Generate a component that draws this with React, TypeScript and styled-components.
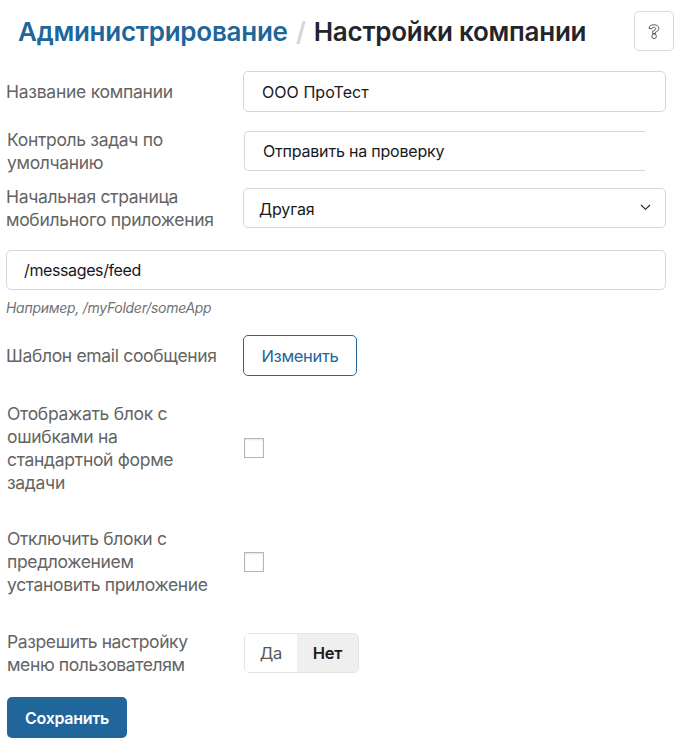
import React, { useState } from 'react';
import styled, { createGlobalStyle } from 'styled-components';

const GlobalStyle = createGlobalStyle`
  * { box-sizing: border-box; }
  body { margin: 0; background: #fff; }
  body, input, button { font-family: Inter, "Liberation Sans", sans-serif; }
`;

const Page = styled.main`
  width: 680px;
  height: 748px;
  padding: 11px 6px 0;
  overflow: hidden;
`;

const Header = styled.header`
  display: flex;
  justify-content: space-between;
  height: 40px;
  padding-left: 12px;
`;

const Title = styled.h1`
  display: flex;
  margin: 0;
  font-size: 26px;
  font-weight: 560;
  line-height: 41px;
  letter-spacing: -0.25px;
  white-space: nowrap;
  color: #22262c;
`;

const TitleLink = styled.a`
  color: #20669b;
  text-decoration: none;
`;

const Slash = styled.span`
  width: 26px;
  text-align: center;
  color: #d4d4d4;
`;

const HelpButton = styled.button`
  display: grid;
  place-items: center;
  width: 40px;
  height: 40px;
  padding: 2px 0 0;
  border: 1px solid #d9dadb;
  border-radius: 5px;
  background: #fff;
`;

const Row = styled.div<{ $gap: number; $height?: number; $inset?: boolean }>`
  display: grid;
  grid-template-columns: 237px 423px;
  grid-template-rows: 100%;
  align-items: center;
  height: ${(p) => p.$height ?? 40}px;
  margin-top: ${(p) => p.$gap}px;
  padding-left: ${(p) => (p.$inset ? 1 : 0)}px;
`;

const Label = styled.span<{ $spacing?: number; $lift?: number }>`
  margin-bottom: ${(p) => p.$lift ?? 0}px;
  font-size: 17.5px;
  line-height: 23px;
  letter-spacing: ${(p) => p.$spacing ?? -0.33}px;
  color: #646464;
  white-space: pre-line;
`;

const Field = styled.input<{ $cut?: boolean; $spacing?: number }>`
  width: ${(p) => (p.$cut ? '401px' : '100%')};
  height: 100%;
  padding: 0 18px;
  border: 1px solid #d6d7d8;
  border-radius: 5px;
  outline: 0;
  font-size: 16px;
  letter-spacing: ${(p) => p.$spacing ?? -0.2}px;
  color: #17191c;
  ${(p) => p.$cut && 'border-right: 0; border-radius: 5px 0 0 5px;'}
`;

const Select = styled.button`
  display: flex;
  align-items: center;
  justify-content: space-between;
  height: 100%;
  padding: 0 14px 0 15px;
  border: 1px solid #d6d7d8;
  border-radius: 5px;
  background: #fff;
  font-size: 16px;
  letter-spacing: -0.15px;
  color: #17191c;

  span { padding-top: 2px; }
`;

const PathField = styled.div`
  width: 660px;
  height: 40px;
  margin-top: 22px;

  input { padding-left: 17px; }
`;

const Hint = styled.p`
  margin: 8px 0 0;
  font-size: 14px;
  font-style: italic;
  line-height: 20px;
  letter-spacing: -0.28px;
  color: #727272;
`;

const OutlineButton = styled.button`
  width: 114px;
  height: 41px;
  padding: 1px 0 0;
  border: 1px solid #20669b;
  border-radius: 5px;
  background: #fff;
  font-size: 16.5px;
  letter-spacing: -0.33px;
  color: #20669b;
`;

const Checkbox = styled.input`
  appearance: none;
  width: 20px;
  height: 20px;
  margin: 0;
  border: 1px solid #b5b5b5;
  background: #fff;
  box-shadow: inset 0 1px 2px #e4e4e4;
`;

const Toggle = styled.div`
  display: flex;
  width: 115px;
  height: 40px;
  border: 1px solid #e5e5e5;
  border-radius: 5px;
  overflow: hidden;
`;

const ToggleOption = styled.button<{ $active: boolean; $width: number }>`
  width: ${(p) => p.$width}px;
  padding: 0;
  border: 0;
  background: ${(p) => (p.$active ? '#efefef' : '#fff')};
  font-size: 16.5px;
  font-weight: ${(p) => (p.$active ? 600 : 400)};
  letter-spacing: -0.2px;
  color: ${(p) => (p.$active ? '#1d1d1f' : '#555')};
`;

const SaveButton = styled.button`
  display: block;
  width: 120px;
  height: 41px;
  margin: 24px 0 0 1px;
  padding: 0;
  border: 0;
  border-radius: 5px;
  background: #20669b;
  font-size: 16px;
  font-weight: 560;
  letter-spacing: -0.3px;
  color: #fff;
`;

export default function App() {
  const [allowed, setAllowed] = useState(false);
  return (
    <>
      <GlobalStyle />
      <Page>
        <Header>
          <Title>
            <TitleLink>Администрирование</TitleLink>
            <Slash>/</Slash>
            <span>Настройки компании</span>
          </Title>
          <HelpButton aria-label="Помощь">
            <svg width="12" height="16" viewBox="0 0 12 16" fill="none" stroke="#4a4a4a" strokeWidth="0.9">
              <path d="M1 4.300C1 2 3 .8 5.800.8c2.900 0 5 1.300 5 3.600 0 2.200-1.500 3-3.300 3.700v1.400H4.700V7C6.500 6.500 7.700 6 7.700 4.800c0-1-.8-1.500-1.900-1.500S4 4 3.800 4.900z" />
              <circle cx="6.100" cy="12.300" r="2.300" />
            </svg>
          </HelpButton>
        </Header>
        <Row $gap={20} $height={41}>
          <Label $spacing={-0.26}>Название компании</Label>
          <Field $spacing={0.05} defaultValue="ООО ПроТест" />
        </Row>
        <Row $gap={19} $inset>
          <Label>{'Контроль задач по\nумолчанию'}</Label>
          <Field $cut defaultValue="Отправить на проверку" />
        </Row>
        <Row $gap={17}>
          <Label $spacing={-0.3}>{'Начальная страница\nмобильного приложения'}</Label>
          <Select>
            <span>Другая</span>
            <svg width="11" height="9" viewBox="0 0 11 9" fill="none" stroke="#222" strokeWidth="1.1">
              <path d="M1 1l4.500 4.300L10 1" />
            </svg>
          </Select>
        </Row>
        <PathField>
          <Field $spacing={-0.38} defaultValue="/messages/feed" />
        </PathField>
        <Hint>Например, /myFolder/someApp</Hint>
        <Row $gap={17} $height={41}>
          <Label>Шаблон email сообщения</Label>
          <OutlineButton>Изменить</OutlineButton>
        </Row>
        <Row $gap={26} $height={92} $inset>
          <Label $spacing={-0.3}>{'Отображать блок с\nошибками на\nстандартной форме\nзадачи'}</Label>
          <Checkbox type="checkbox" />
        </Row>
        <Row $gap={33} $height={70} $inset>
          <Label $lift={1} $spacing={-0.35}>{'Отключить блоки с\nпредложением\nустановить приложение'}</Label>
          <Checkbox type="checkbox" />
        </Row>
        <Row $gap={36} $inset>
          <Label $spacing={-0.38}>{'Разрешить настройку\nменю пользователям'}</Label>
          <Toggle>
            <ToggleOption $active={allowed} $width={52} onClick={() => setAllowed(true)}>Да</ToggleOption>
            <ToggleOption $active={!allowed} $width={61} onClick={() => setAllowed(false)}>Нет</ToggleOption>
          </Toggle>
        </Row>
        <SaveButton>Сохранить</SaveButton>
      </Page>
    </>
  );
}
